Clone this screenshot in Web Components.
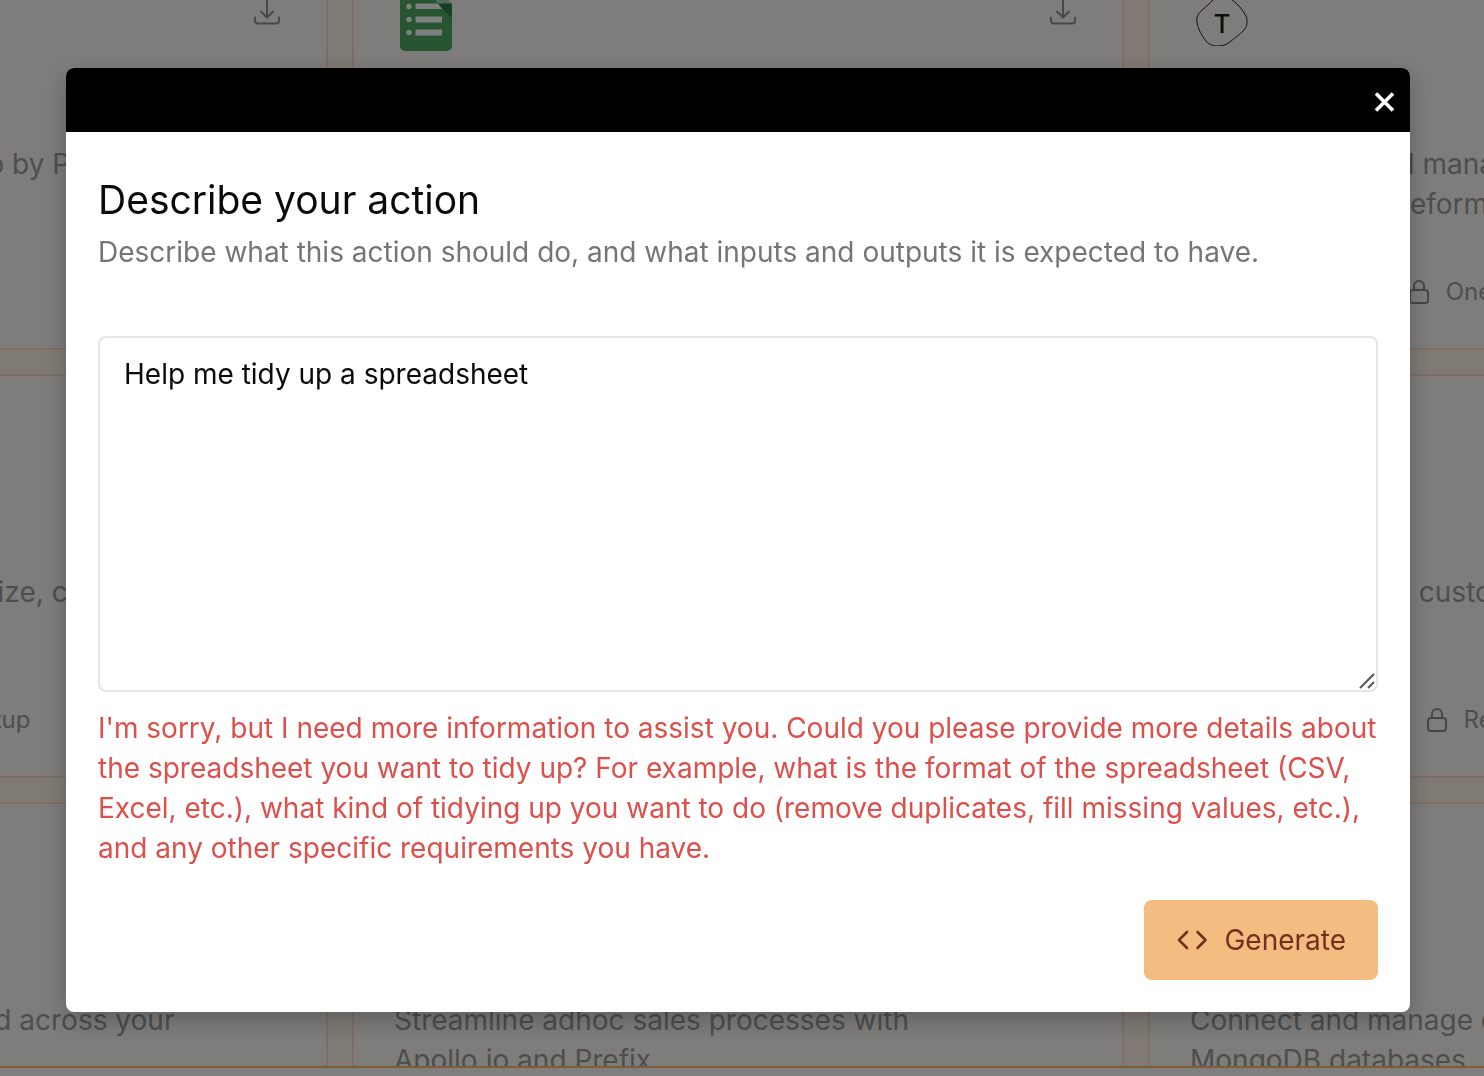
<!DOCTYPE html>
<html lang="en">
<head>
<meta charset="utf-8">
<meta name="viewport" content="width=device-width, initial-scale=1">
<title>Describe your action</title>
<style>
  html, body { height: 100%; }
  body {
    margin: 0;
    overflow: hidden;
    background: #fff;
    font-family: Inter, "Liberation Sans", sans-serif;
    font-size: 28px;
    line-height: 40px;
    color: #0a0a0a;
  }
</style>
</head>
<body>
<action-library>
  <action-card>
    <span>Enrich contact record with info by Prefix</span>
  </action-card>
  <action-card logo="sheets">
    <span>Read and update rows in a spreadsheet</span>
  </action-card>
  <action-card logo="typeform" kind="Integration" setup="One-click setup">
    <span>Build, assign and manage<br>forms inside Typeform</span>
  </action-card>

  <action-card kind="Transforms" setup="Requires setup">
    <span>Use scaled models to summarize, classify</span>
  </action-card>
  <action-card>
    <span>Send messages to your team</span>
  </action-card>
  <action-card kind="Transformer" setup="Requires setup">
    <span>Look up and edit customers</span>
  </action-card>

  <action-card>
    <span>Search files that are stored and across your</span>
  </action-card>
  <action-card>
    <span>Streamline adhoc sales processes with<br>Apollo.io and Prefix</span>
  </action-card>
  <action-card>
    <span>Connect and manage data in your<br>MongoDB databases</span>
  </action-card>
</action-library>

<modal-dialog>
  <action-prompt></action-prompt>
</modal-dialog>

<script>
const LOGOS = {
  sheets: `<svg width="52" height="64" viewBox="0 0 52 64" aria-hidden="true">
    <path fill="#4fa862" d="M5 0h31l16 16v42a5 5 0 0 1-5 5H5a5 5 0 0 1-5-5V5a5 5 0 0 1 5-5z"/>
    <path fill="#2f7f45" d="M37 15h15v15z"/>
    <path fill="#a8d5b2" d="M36 0l16 15.500H40a4 4 0 0 1-4-4z"/>
    <g fill="#fff"><circle cx="9" cy="18.500" r="2.700"/><circle cx="9" cy="31.500" r="2.700"/><circle cx="9" cy="44.500" r="2.700"/>
    <path d="M15.500 15.500H38l4 5.500H15.500zM15.500 28.500H42v6H15.500zM15.500 41.500H42v6H15.500z"/></g></svg>`,
  typeform: `<span class="blob"><svg width="52" height="52" viewBox="0 0 52 52" aria-hidden="true">
    <path fill="none" stroke="#222" stroke-width="1" d="M17 6C22 1 30 1 35 5c7 5 12 11 15 17 2 5 1 11-2 14-4 5-10 8-14 12-4 3-8 4-12 4-5 0-8-1-12-5C6 42 2 35 1 29c-1-6 1-9 5-13 5-4 8-7 11-10z"/></svg><b>T</b></span>`
};
const DOWNLOAD = `<svg width="40" height="40" viewBox="0 0 40 40" fill="none" stroke="#909090" stroke-width="2" stroke-linecap="round" stroke-linejoin="round" aria-hidden="true">
  <path d="M21 4v25M15 23.500l6 6 6-6M9 29.500v3a3 3 0 0 0 3 3h18a3 3 0 0 0 3-3v-3"/></svg>`;
const LOCK = `<svg width="22" height="28" viewBox="0 0 22 28" fill="none" stroke="#8c8c8c" stroke-width="2" aria-hidden="true">
  <rect x="2" y="12" width="18" height="13" rx="3"/><path d="M6 12V8a5 5 0 0 1 10 0v4"/></svg>`;
const GEAR = `<svg width="28" height="28" viewBox="0 0 28 28" fill="none" stroke="#8c8c8c" stroke-width="2" aria-hidden="true">
  <circle cx="14" cy="14" r="9"/><circle cx="14" cy="14" r="3"/></svg>`;

class ActionLibrary extends HTMLElement {
  constructor() {
    super();
    this.attachShadow({ mode: 'open' }).innerHTML = `
      <style>
        :host {
          display: flex; justify-content: center; align-items: flex-start;
          box-sizing: border-box; height: calc(100vh - 8px); padding-right: 8px;
          overflow: hidden; background: #fff6e9; border-bottom: 2px solid #ffb970;
        }
        .grid {
          flex: none; display: grid; gap: 24px; margin-top: -54px;
          grid-template-columns: repeat(3, 772px); grid-auto-rows: 404px;
        }
      </style>
      <main class="grid"><slot></slot></main>`;
  }
}

class ActionCard extends HTMLElement {
  connectedCallback() {
    const setup = this.getAttribute('setup');
    const footer = setup
      ? `<footer><span class="item">${GEAR}${this.getAttribute('kind')}</span><span class="item">${LOCK}${setup}</span></footer>` : '';
    this.attachShadow({ mode: 'open' }).innerHTML = `
      <style>
        :host {
          display: flex; flex-direction: column; box-sizing: border-box;
          padding: 40px 40px 36px; border: 2px solid #ffdccb;
          background: #fefbf6; color: #9c9c9c;
        }
        header { display: flex; justify-content: space-between; height: 64px; margin-bottom: 92px; }
        .logo { display: flex; justify-content: center; width: 64px; height: 64px; }
        .blob { display: grid; place-items: center; }
        .blob > * { grid-area: 1 / 1; }
        b { padding-top: 8px; font-size: 26px; font-weight: 500; color: #1c1c1c; }
        p { margin: 0; }
        footer { display: flex; align-items: center; gap: 52px; margin-top: auto; font-size: 24px; }
        .item { display: flex; align-items: center; gap: 16px; }
      </style>
      <header><span class="logo">${LOGOS[this.getAttribute('logo')] || ''}</span>${DOWNLOAD}</header>
      <p><slot></slot></p>${footer}`;
  }
}

class ModalDialog extends HTMLElement {
  constructor() {
    super();
    this.attachShadow({ mode: 'open' }).innerHTML = `
      <style>
        :host {
          position: fixed; inset: 0; box-sizing: border-box;
          padding: 68px 74px 64px 66px; background: rgba(0, 0, 0, .5);
        }
        section {
          border-radius: 8px; overflow: hidden; background: #fff;
          box-shadow: 0 8px 24px rgba(0, 0, 0, .25);
        }
        header {
          display: flex; justify-content: flex-end; align-items: center;
          box-sizing: border-box; height: 64px; padding: 4px 12px 0; background: #000;
        }
        button { display: flex; padding: 0; border: 0; background: none; cursor: pointer; }
        .body { padding: 40px 32px 32px; }
      </style>
      <section role="dialog" aria-modal="true">
        <header><button type="button" aria-label="Close">
          <svg width="28" height="28" viewBox="0 0 28 28" stroke="#fff" stroke-width="3.600" aria-hidden="true"><path d="M6 5.500l17 17M23 5.500l-17 17"/></svg>
        </button></header>
        <div class="body"><slot></slot></div>
      </section>`;
  }
}

class ActionPrompt extends HTMLElement {
  constructor() {
    super();
    this.attachShadow({ mode: 'open' }).innerHTML = `
      <style>
        :host { display: block; }
        h1 { margin: 0 0 4px; font-size: 39px; line-height: 56px; font-weight: 400; }
        label { display: block; margin-bottom: 64px; color: #757575; }
        .field { display: grid; position: relative; }
        textarea {
          display: block; box-sizing: border-box; width: 100%; margin: 0;
          padding: 16px 24px; border: 2px solid #e5e5e5; border-radius: 8px;
          background: #fff; color: inherit; font: inherit; resize: vertical; outline: none;
        }
        textarea::-webkit-resizer { background: transparent; }
        .grip { position: absolute; right: 3px; bottom: 3px; pointer-events: none; }
        .error { margin: 16px 0 32px; color: #dc4f4a; }
        .actions { display: flex; justify-content: flex-end; }
        button {
          display: flex; align-items: center; gap: 16px; height: 80px; padding: 0 32px;
          border: 0; border-radius: 8px; background: #f3bc80; color: #74301c;
          font: inherit; cursor: pointer;
        }
      </style>
      <h1>Describe your action</h1>
      <label for="prompt">Describe what this action should do, and what inputs and outputs it is expected to have.</label>
      <div class="field">
        <textarea id="prompt" rows="8" spellcheck="false">Help me tidy up a spreadsheet</textarea>
        <svg class="grip" width="16" height="16" viewBox="0 0 16 16" stroke="#555" stroke-width="2" aria-hidden="true"><path d="M1 15L15 1M9 15l6-6"/></svg>
      </div>
      <p class="error" role="alert">I'm sorry, but I need more information to assist you. Could you please provide more details about the spreadsheet you want to tidy up? For example, what is the format of the spreadsheet (CSV, Excel, etc.), what kind of tidying up you want to do (remove duplicates, fill missing values, etc.), and any other specific requirements you have.</p>
      <div class="actions">
        <button type="button">
          <svg width="32" height="32" viewBox="0 0 32 32" fill="none" stroke="currentColor" stroke-width="2.600" stroke-linejoin="round" stroke-linecap="round" aria-hidden="true"><path d="M11 8L3 16l8 8M21.500 8l8 8-8 8"/></svg>
          Generate
        </button>
      </div>`;
  }
}

customElements.define('action-library', ActionLibrary);
customElements.define('action-card', ActionCard);
customElements.define('modal-dialog', ModalDialog);
customElements.define('action-prompt', ActionPrompt);
</script>
</body>
</html>
